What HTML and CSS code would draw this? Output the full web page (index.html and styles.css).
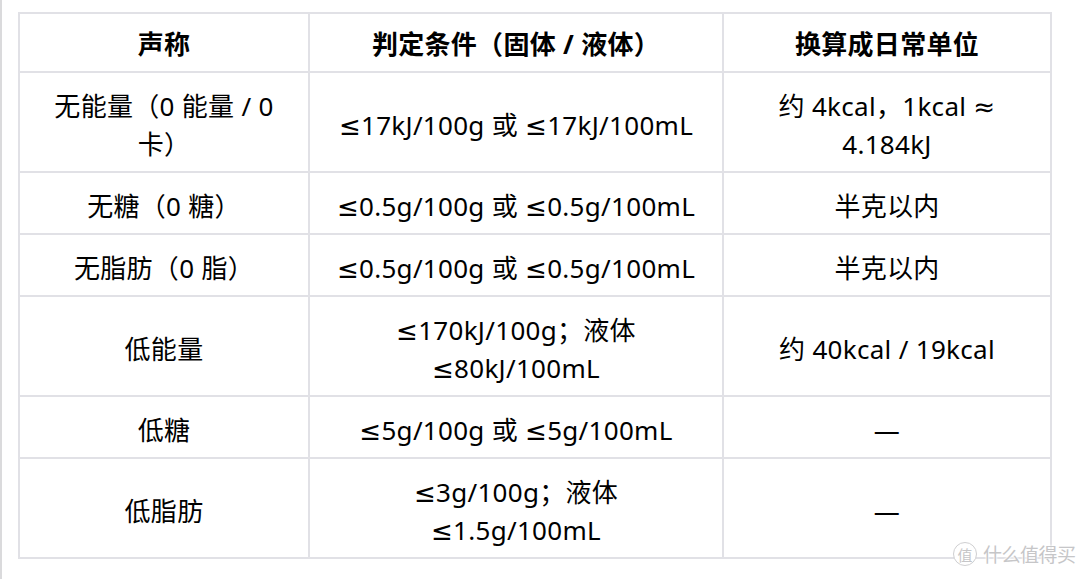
FILE: index.html
```html
<!DOCTYPE html>
<html lang="zh">
<head>
<meta charset="utf-8">
<title>营养声称</title>
<link rel="stylesheet" href="styles.css">
</head>
<body>
<div class="page">
  <table class="claims">
    <colgroup>
      <col class="c1"><col class="c2"><col class="c3">
    </colgroup>
    <thead>
      <tr><th>声称</th><th>判定条件（固体 / 液体）</th><th>换算成日常单位</th></tr>
    </thead>
    <tbody>
      <tr><td>无能量（0 能量 / 0<br>卡）</td><td>≤17kJ/100g 或 ≤17kJ/100mL</td><td>约 4kcal，1kcal ≈<br>4.184kJ</td></tr>
      <tr><td>无糖（0 糖）</td><td>≤0.5g/100g 或 ≤0.5g/100mL</td><td>半克以内</td></tr>
      <tr><td>无脂肪（0 脂）</td><td>≤0.5g/100g 或 ≤0.5g/100mL</td><td>半克以内</td></tr>
      <tr><td>低能量</td><td>≤170kJ/100g；液体<br>≤80kJ/100mL</td><td>约 40kcal / 19kcal</td></tr>
      <tr><td>低糖</td><td>≤5g/100g 或 ≤5g/100mL</td><td>—</td></tr>
      <tr><td>低脂肪</td><td>≤3g/100g；液体<br>≤1.5g/100mL</td><td>—</td></tr>
    </tbody>
  </table>
  <div class="watermark"><span class="wm-logo">值</span><span class="wm-text">什么值得买</span></div>
</div>
</body>
</html>
```
FILE: styles.css
```css
html, body {
  margin: 0;
  padding: 0;
  background: #ffffff;
}
.page {
  position: relative;
  box-sizing: border-box;
  height: 579px;
  border-left: 2px solid #dadadc;
  padding: 12px 0 0 16px;
  font-family: "Noto Sans", "DejaVu Sans", "Noto Sans CJK SC", sans-serif;
  color: #000000;
}
.claims {
  border-collapse: collapse;
  table-layout: fixed;
  width: 1032px;
}
.claims .c1 { width: 290px; }
.claims .c2 { width: 414px; }
.claims .c3 { width: 328px; }
.claims th,
.claims td {
  border: 2px solid #e1e1e6;
  text-align: center;
  vertical-align: middle;
  white-space: nowrap;
  font-size: 26px;
  letter-spacing: 0.3px;
}
.claims th {
  font-weight: 700;
  line-height: 38px;
  padding: 11px 8px 8px;
}
.claims td {
  font-weight: 400;
  line-height: 38px;
  padding: 14px 8px 8px;
}
.watermark {
  position: absolute;
  left: 951px;
  top: 540px;
  display: flex;
  align-items: center;
  gap: 6px;
  color: #c6c6c8;
  font-family: "Noto Sans CJK SC", sans-serif;
}
.wm-logo {
  display: flex;
  align-items: center;
  justify-content: center;
  width: 22px;
  height: 22px;
  border: 1.5px solid #cfcfd1;
  border-radius: 50%;
  background: #ffffff;
  font-size: 15px;
  line-height: 1;
}
.wm-text {
  font-size: 19px;
  line-height: 28px;
  letter-spacing: -0.5px;
  text-shadow: 0 0 2px #fff, 0 0 2px #fff, 0 0 3px #fff;
}
```
